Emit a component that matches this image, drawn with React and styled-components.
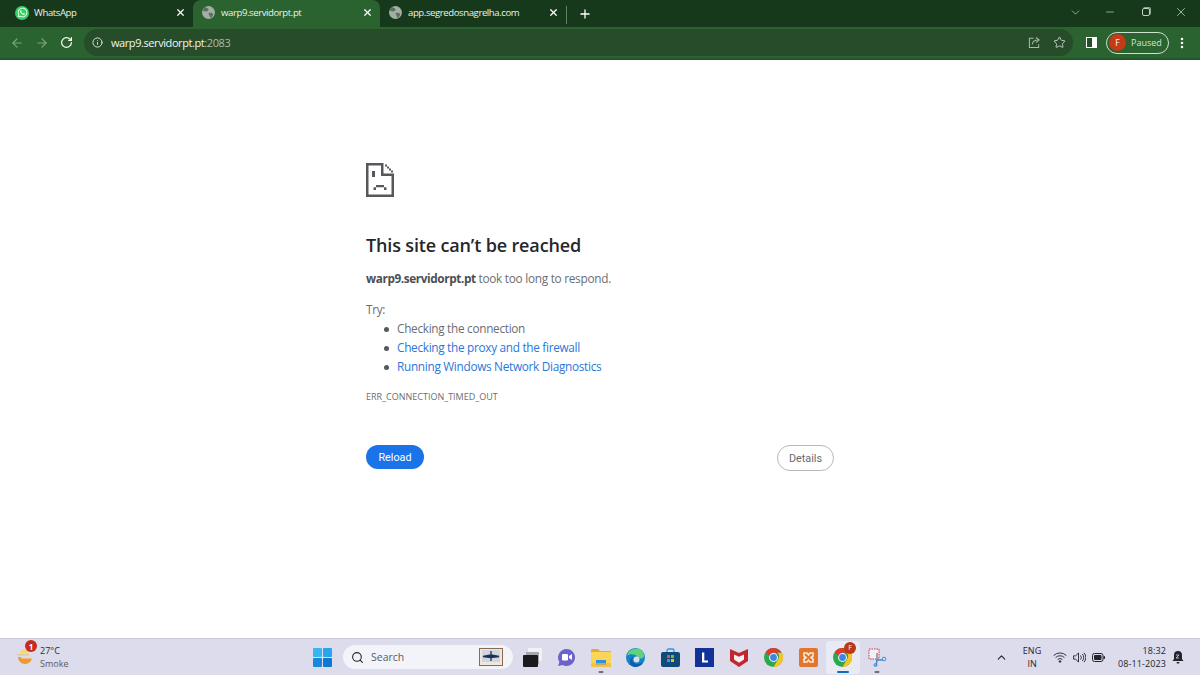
import React from "react";
import styled, { createGlobalStyle } from "styled-components";
import {
  ArrowLeft,
  ArrowRight,
  RotateCw,
  Info,
  Star,
  Plus,
  X,
  ChevronDown,
  ChevronUp,
  Minus,
  Search,
  EllipsisVertical,
} from "lucide-react";
import { FaWhatsapp } from "react-icons/fa";

const GlobalStyle = createGlobalStyle`
  html, body { margin: 0; padding: 0; background: #ffffff; }
  * { box-sizing: border-box; }
`;

const Screen = styled.div`
  width: 1200px;
  height: 675px;
  display: flex;
  flex-direction: column;
  overflow: hidden;
  font-family: "Open Sans", "Noto Sans", sans-serif;
`;

const TabStrip = styled.div`
  height: 27px;
  background: #17391b;
  display: flex;
  align-items: flex-end;
  color: #ffffff;
`;

const Tab = styled.div`
  width: ${(p) => p.$w}px;
  height: 27px;
  display: flex;
  align-items: center;
  padding: 0 7px 2px ${(p) => p.$pl}px;
  gap: ${(p) => p.$gap}px;
  font-size: 9.6px;
  letter-spacing: -0.42px;
  border-radius: 8px 8px 0 0;
  background: ${(p) => (p.$active ? "#2a632f" : "transparent")};
`;

const TabTitle = styled.span`
  flex: 1;
  white-space: nowrap;
  color: #eaf2ea;
`;

const WhatsBadge = styled.span`
  width: 14px;
  height: 14px;
  border-radius: 50%;
  background: #2fd35f;
  display: flex;
  align-items: center;
  justify-content: center;
  color: #ffffff;
`;

const StripDivider = styled.span`
  width: 1px;
  height: 18px;
  margin-bottom: 3px;
  background: #61806a;
`;

const StripPlus = styled.span`
  display: flex;
  margin-left: 11px;
  margin-bottom: 6px;
`;

const WindowControls = styled.div`
  margin-left: auto;
  height: 27px;
  padding-bottom: 3px;
  display: flex;
  align-items: center;
  color: #d8e4d8;
`;

const WindowButton = styled.span`
  width: ${(p) => p.$w}px;
  display: flex;
  justify-content: center;
`;

const RestoreIcon = styled.span`
  width: 8px;
  height: 8px;
  border: 1.2px solid #c3d0c4;
  border-radius: 2px;
  box-shadow: 1px -1px 0 0 #8fa893;
`;

const Toolbar = styled.div`
  height: 33px;
  background: #2a632f;
  border-bottom: 2px solid #245528;
  display: flex;
  align-items: center;
  padding-left: 4px;
  color: #ffffff;
`;

const NavButton = styled.span`
  width: 25px;
  display: flex;
  justify-content: center;
  color: ${(p) => (p.$off ? "#7fa483" : "#ffffff")};
`;

const Omnibox = styled.div`
  width: 989px;
  height: 27px;
  margin-left: 5px;
  border-radius: 14px;
  background: #264c29;
  display: flex;
  align-items: center;
  padding: 0 7px 0 8px;
  gap: 8px;
  font-size: 11px;
  letter-spacing: -0.42px;
`;

const Host = styled.span`
  color: #f2f6f2;
`;

const Port = styled.span`
  color: #a9bcab;
`;

const Address = styled.span`
  flex: 1;
`;

const OmniIcons = styled.span`
  display: flex;
  align-items: center;
  gap: 12px;
  color: #d0ddd1;
`;

const ShareWrap = styled.span`
  display: flex;
  color: #a8bcaa;
`;

const ToolbarRight = styled.div`
  display: flex;
  align-items: center;
  margin-left: 13px;
`;

const SidePanelIcon = styled.span`
  width: 11px;
  height: 11px;
  border: 1.5px solid #ffffff;
  border-right-width: 5px;
  background: #264c29;
`;

const ProfileChip = styled.div`
  width: 63px;
  height: 22px;
  margin-left: 9px;
  border: 1px solid #cfe0d0;
  border-radius: 11px;
  display: flex;
  align-items: center;
  padding-left: 2px;
  gap: 5px;
  font-size: 9px;
  color: #d3e5d5;
`;

const Avatar = styled.span`
  width: 17px;
  height: 17px;
  border-radius: 50%;
  background: #c63a17;
  color: #ffffff;
  font-size: 8.5px;
  display: flex;
  align-items: center;
  justify-content: center;
`;

const MenuDots = styled.span`
  display: flex;
  margin-left: 6px;
`;

const Page = styled.main`
  flex: 1;
  background: #ffffff;
  padding: 103px 0 0 366px;
`;

const ErrorBody = styled.div`
  width: 468px;
`;

const SadIcon = styled.svg`
  display: block;
  width: 28px;
  height: 34px;
`;

const Heading = styled.h1`
  margin: 35px 0 0;
  font-size: 18px;
  line-height: 26px;
  font-weight: 600;
  letter-spacing: -0.15px;
  color: #26272a;
`;

const Lead = styled.p`
  margin: 11px 0 0;
  font-size: 11.8px;
  letter-spacing: -0.27px;
  line-height: 19px;
  color: #6a6e73;
`;

const Strong = styled.strong`
  font-weight: 700;
  letter-spacing: -0.4px;
  color: #4b4f54;
`;

const TryLabel = styled.p`
  margin: 12px 0 0;
  font-size: 11.8px;
  letter-spacing: -0.3px;
  line-height: 19px;
  color: #6a6e73;
`;

const TryList = styled.ul`
  margin: 0;
  padding: 0 0 0 31px;
  list-style: none;
`;

const TryItem = styled.li`
  font-size: 11.8px;
  letter-spacing: -0.3px;
  line-height: 19px;
  color: ${(p) => (p.$link ? "#2b76d8" : "#6a6e73")};
  &::before {
    content: "";
    display: inline-block;
    width: 5px;
    height: 5px;
    margin: 0 8px 1px -13px;
    border-radius: 50%;
    background: #55585c;
    vertical-align: middle;
  }
`;

const ErrorCode = styled.div`
  margin-top: 14px;
  font-size: 9px;
  line-height: 14px;
  color: #6a6e73;
`;

const Actions = styled.div`
  margin-top: 41px;
  display: flex;
  justify-content: space-between;
  align-items: flex-start;
`;

const PrimaryButton = styled.button`
  width: 58px;
  height: 24px;
  border: 0;
  border-radius: 12px;
  background: #1a73e8;
  color: #ffffff;
  font-family: "Roboto", sans-serif;
  font-size: 10.8px;
  padding: 0;
`;

const GhostButton = styled.button`
  width: 57px;
  height: 26px;
  border: 1px solid #b6b8bb;
  border-radius: 13px;
  background: #ffffff;
  color: #666a6e;
  font-family: "Roboto", sans-serif;
  font-size: 10.8px;
  padding: 0;
`;

const Taskbar = styled.footer`
  height: 37px;
  background: #dcdcec;
  border-top: 1px solid #c9cadb;
  display: flex;
  align-items: center;
  position: relative;
`;

const WeatherWidget = styled.div`
  width: 313px;
  display: flex;
  align-items: center;
  padding-left: 16px;
  gap: 6px;
`;

const WeatherIcon = styled.span`
  position: relative;
  width: 18px;
  height: 18px;
  display: flex;
`;

const AlertBadge = styled.span`
  position: absolute;
  top: -8px;
  left: 9px;
  width: 12px;
  height: 12px;
  border-radius: 50%;
  background: #c62a20;
  color: #ffffff;
  font-size: 8px;
  font-weight: 700;
  display: flex;
  align-items: center;
  justify-content: center;
`;

const WeatherText = styled.div`
  display: flex;
  flex-direction: column;
  font-size: 9px;
  line-height: 13px;
  color: #2b2b33;
`;

const Muted = styled.span`
  color: #5b5b66;
`;

const SearchPill = styled.div`
  width: 170px;
  height: 24px;
  margin-left: 11px;
  border-radius: 12px;
  background: #f3f3fa;
  display: flex;
  align-items: center;
  padding: 0 10px 0 8px;
  gap: 7px;
  font-size: 10.5px;
  color: #5a5a62;
`;

const SearchLabel = styled.span`
  flex: 1;
`;

const Dock = styled.div`
  display: flex;
  align-items: center;
  margin-left: 2px;
`;

const DockSlot = styled.div`
  position: relative;
  width: 34.5px;
  height: 33px;
  display: flex;
  align-items: center;
  justify-content: center;
  border-radius: 3px;
  background: ${(p) => (p.$active ? "#eaeaf4" : "transparent")};
  &::after {
    content: "";
    display: ${(p) => (p.$mark ? "block" : "none")};
    position: absolute;
    bottom: 1px;
    left: 50%;
    transform: translateX(-50%);
    width: ${(p) => (p.$mark === "on" ? 12 : 5)}px;
    height: 2px;
    border-radius: 1px;
    background: ${(p) => (p.$mark === "on" ? "#0f6cbd" : "#6d6d78")};
  }
`;

const ProfileDot = styled.span`
  position: absolute;
  top: 1px;
  right: 4px;
  width: 12px;
  height: 12px;
  border-radius: 50%;
  background: #b93a14;
  color: #ffffff;
  font-size: 7px;
  display: flex;
  align-items: center;
  justify-content: center;
`;

const Tray = styled.div`
  margin-left: auto;
  display: flex;
  align-items: center;
  color: #24242c;
  padding-right: 16px;
`;

const LangBlock = styled.div`
  width: 26px;
  margin-left: 11px;
  display: flex;
  flex-direction: column;
  align-items: center;
  font-size: 9px;
  line-height: 13px;
`;

const TrayIcons = styled.div`
  display: flex;
  align-items: center;
  gap: 6px;
  margin-left: 8px;
`;

const Clock = styled.div`
  margin-left: 13px;
  display: flex;
  flex-direction: column;
  align-items: flex-end;
  font-size: 9px;
  line-height: 13px;
  letter-spacing: 0.1px;
`;

const BellWrap = styled.span`
  display: flex;
  margin-left: 6px;
`;

const TabGlobe = () => (
  <svg width="13" height="13" viewBox="0 0 13 13">
    <circle cx="6.500" cy="6.500" r="6.500" fill="#a3aea4" />
    <path d="M3 1.200c1.500.3 3 .8 3.500 2S5 5.500 4 5.500 1.500 4.800.6 4.500A6.500 6.500 0 0 1 3 1.200zM7 7c1.500-.5 3.500 0 4 1s-1 3-2.500 4c-.8-1-.7-2-1.200-3S5.800 7.500 7 7z" fill="#5d6f60" />
  </svg>
);

const ShareIcon = () => (
  <svg width="13" height="13" viewBox="0 0 14 14" fill="none" stroke="currentColor" strokeWidth="1.1">
    <path d="M6 2.5H1.5v10h10V9" />
    <path d="M4.5 9c.5-3 3-4.6 6-4.6M8.600 1.600l3.400 2.800-3.400 2.800" />
  </svg>
);

const SadTabIcon = () => (
  <SadIcon viewBox="0 0 28 34">
    <path
      fill="#58585c"
      d="M0 0h17.500v2.500H2.500v29h23V12h2.500v22H0zM15 2h2.500v8.500H28V13H15zM19 1.500h2v2h-2zM21 3.500h2v2h-2zM23 5.500h2v2h-2zM25 7.500h2v2h-2zM6 8h3v6H6zM10 22h8v2.200h-8zM7.500 24.200H10V27H7.500zM18 24.200h2.500V27H18z"
    />
  </SadIcon>
);

const WeatherArt = () => (
  <svg width="18" height="18" viewBox="0 0 18 18">
    <path d="M2 9a7 7 0 0 0 14 0z" fill="#ef9a2f" />
    <path d="M4 4a5 5 0 0 1 9 1H4z" fill="#f5d67a" />
    <rect x="1" y="6" width="12" height="1.600" rx=".8" fill="#d9c9a0" />
    <rect x="5" y="9" width="12" height="1.600" rx=".8" fill="#e8dcc0" />
  </svg>
);

const BookArt = () => (
  <svg width="24" height="18" viewBox="0 0 24 18">
    <rect x=".5" y=".5" width="23" height="17" fill="#eee7da" stroke="#8a6a50" />
    <rect x="3" y="2" width="18" height="12" fill="#cfd6e2" />
    <path d="M12 3v10M4 8.500l8-1.500 8 1.500-8 1z" stroke="#1f2f52" strokeWidth="1.300" fill="#1f2f52" />
  </svg>
);

const WinLogo = () => (
  <svg width="19" height="19" viewBox="0 0 19 19">
    <rect width="9" height="9" rx="1" fill="#38b6f0" />
    <rect x="10" width="9" height="9" rx="1" fill="#2aa5ea" />
    <rect y="10" width="9" height="9" rx="1" fill="#1689dc" />
    <rect x="10" y="10" width="9" height="9" rx="1" fill="#0f78cf" />
  </svg>
);

const TaskViewArt = () => (
  <svg width="19" height="19" viewBox="0 0 19 19">
    <rect x="5" y="0" width="14" height="13" rx="1" fill="#f2f2f5" />
    <rect x="3" y="4" width="13" height="12" fill="#a6a6ac" />
    <rect x="0" y="7" width="15" height="12" rx="1" fill="#1b1b1d" />
  </svg>
);

const ChatArt = () => (
  <svg width="19" height="19" viewBox="0 0 19 19">
    <path d="M9.500 1a8.500 8.500 0 1 1-4 16L1 18l1.400-4A8.500 8.500 0 0 1 9.500 1z" fill="#6b63c9" />
    <rect x="5" y="6" width="6" height="6.500" rx="1.200" fill="#fff" />
    <path d="M12 8l3-2v6l-3-2z" fill="#fff" />
  </svg>
);

const FolderArt = () => (
  <svg width="20" height="19" viewBox="0 0 20 19">
    <path d="M0 2a1 1 0 0 1 1-1h6l2 2h10a1 1 0 0 1 1 1v2H0z" fill="#e6ab2c" />
    <rect y="4" width="20" height="15" rx="1" fill="#fbd458" />
    <rect x="5" y="12" width="10" height="5" fill="#2f8fe0" />
    <rect y="15" width="20" height="4" rx="1" fill="#f0b93c" opacity=".7" />
  </svg>
);

const EdgeArt = () => (
  <svg width="19" height="19" viewBox="0 0 19 19">
    <circle cx="9.500" cy="9.500" r="9.500" fill="#1583c9" />
    <path d="M1 8a8.800 8.800 0 0 1 17-1.500c.6 2.600-1.600 4.200-4 4-2.600-.2-2-2.600-4.500-3.500C6 5.500 3 6 1 8z" fill="#5fd27c" />
    <path d="M8 9c-2 1-2.500 5 1 6.500 2.500 1 5.500.5 8-1.500-1.500 3-4.500 5-8 5C5 19 3 15 4.500 11.500 5 10 6.500 9 8 9z" fill="#0c5fa8" />
    <circle cx="10.500" cy="11.500" r="3" fill="#dcdcec" />
  </svg>
);

const StoreArt = () => (
  <svg width="19" height="19" viewBox="0 0 19 19">
    <path d="M6 4V2.500A1.500 1.500 0 0 1 7.500 1h4A1.500 1.500 0 0 1 13 2.500V4" fill="none" stroke="#2c9bd8" strokeWidth="1.300" />
    <rect y="4" width="19" height="15" rx="2" fill="#0f4a78" />
    <rect x="6" y="7" width="3" height="3" fill="#e8552c" />
    <rect x="10" y="7" width="3" height="3" fill="#7cbc2c" />
    <rect x="6" y="11" width="3" height="3" fill="#2c9be8" />
    <rect x="10" y="11" width="3" height="3" fill="#f4b820" />
  </svg>
);

const LArt = () => (
  <svg width="19" height="19" viewBox="0 0 19 19">
    <rect width="19" height="19" fill="#12329a" />
    <path d="M7 4.500h2.300v8H13V14.500H7z" fill="#fff" />
  </svg>
);

const McAfeeArt = () => (
  <svg width="18" height="19" viewBox="0 0 18 19">
    <path d="M0 1l9 4 9-4v12l-9 6-9-6z" fill="#c1272d" />
    <path d="M4 6.500l5 2.200 5-2.200v5l-5 3.300-5-3.300z" fill="#f4f0f4" />
  </svg>
);

const ChromeArt = () => (
  <svg width="19" height="19" viewBox="0 0 19 19">
    <circle cx="9.500" cy="9.500" r="9.500" fill="#2ea84f" />
    <path d="M9.500 0a9.500 9.500 0 0 1 8.230 4.750H9.500a4.750 4.750 0 0 0-4.300 2.700L1.500 4.200A9.500 9.500 0 0 1 9.500 0z" fill="#dd3b30" />
    <path d="M17.730 4.750A9.500 9.500 0 0 1 9.500 19l4.100-7.100a4.750 4.750 0 0 0 0-7.150z" fill="#f7c325" />
    <circle cx="9.500" cy="9.500" r="4.400" fill="#fff" />
    <circle cx="9.500" cy="9.500" r="3.400" fill="#3f83e8" />
  </svg>
);

const XamppArt = () => (
  <svg width="19" height="19" viewBox="0 0 19 19">
    <rect width="19" height="19" rx="2" fill="#e2762c" />
    <path d="M5 5h3l1.500 2L11 5h3v3l-2 1.500L14 11v3h-3l-1.500-2L8 14H5v-3l2-1.500L5 8z" fill="none" stroke="#fbeadb" strokeWidth="1.600" />
  </svg>
);

const SnipArt = () => (
  <svg width="19" height="19" viewBox="0 0 19 19">
    <rect x="1" y="1" width="10" height="10" fill="#f2f2f6" stroke="#c2334d" strokeDasharray="1.500 1" />
    <path d="M9 5v8" stroke="#7a8c9c" strokeWidth="1.500" />
    <path d="M9 12l-1 6M9 12h6" stroke="#3d8fc9" strokeWidth="1.500" fill="none" />
    <circle cx="16" cy="11" r="1.800" fill="none" stroke="#3d8fc9" />
    <circle cx="7.500" cy="17" r="1.500" fill="none" stroke="#3d8fc9" />
  </svg>
);

const WifiArt = () => (
  <svg width="14" height="11" viewBox="0 0 14 11" fill="none" stroke="#24242c" strokeWidth="0.9">
    <path d="M.6 3.600a9 9 0 0 1 12.800 0M2.600 5.600a6.200 6.200 0 0 1 8.800 0M4.600 7.600a3.400 3.400 0 0 1 4.800 0" />
    <circle cx="7" cy="9.500" r=".8" fill="#24242c" />
  </svg>
);

const VolumeArt = () => (
  <svg width="13" height="11" viewBox="0 0 13 11" fill="none" stroke="#24242c" strokeWidth="0.9">
    <path d="M.6 3.800h2L5.500 1v9L2.600 7.200h-2z" />
    <path d="M7.500 3.500a3 3 0 0 1 0 4M9.300 2a5 5 0 0 1 0 7M11 .8a7 7 0 0 1 0 9.400" />
  </svg>
);

const BatteryArt = () => (
  <svg width="13" height="9" viewBox="0 0 13 9">
    <rect x=".5" y=".5" width="10.500" height="8" rx="2" fill="none" stroke="#24242c" />
    <rect x="2" y="2" width="7.500" height="5" rx="1" fill="#24242c" />
    <rect x="11.500" y="3" width="1.500" height="3" rx=".7" fill="#24242c" />
  </svg>
);

const BellArt = () => (
  <svg width="12" height="14" viewBox="0 0 12 14">
    <path d="M6 1a4 4 0 0 1 4 4v4l1.500 2H.5L2 9V5a4 4 0 0 1 4-4z" fill="#24242c" />
    <rect x="4.500" y="12" width="3" height="1.600" rx=".8" fill="#24242c" />
    <path d="M4 5h3L4 8h3" stroke="#dcdcec" strokeWidth=".8" fill="none" />
  </svg>
);

const dockItems = [
  { key: "tasks", art: <TaskViewArt /> },
  { key: "chat", art: <ChatArt /> },
  { key: "files", art: <FolderArt />, mark: "off" },
  { key: "edge", art: <EdgeArt /> },
  { key: "store", art: <StoreArt /> },
  { key: "lens", art: <LArt /> },
  { key: "mcafee", art: <McAfeeArt /> },
  { key: "chrome", art: <ChromeArt /> },
  { key: "xampp", art: <XamppArt /> },
  { key: "chrome-profile", art: <ChromeArt />, mark: "on", active: true, dot: "F" },
  { key: "snip", art: <SnipArt />, mark: "off" },
];

const tabs = [
  { title: "warp9.servidorpt.pt", w: 187, active: true },
  { title: "app.segredosnagrelha.com", w: 186 },
];

export default function App() {
  return (
    <Screen>
      <GlobalStyle />
      <TabStrip>
        <Tab $w={193} $pl={15} $gap={5}>
          <WhatsBadge>
            <FaWhatsapp size={11} />
          </WhatsBadge>
          <TabTitle>WhatsApp</TabTitle>
          <X size={11} strokeWidth={2.6} />
        </Tab>
        {tabs.map((t) => (
          <Tab key={t.title} $w={t.w} $pl={9} $gap={6} $active={t.active}>
            <TabGlobe />
            <TabTitle>{t.title}</TabTitle>
            <X size={11} strokeWidth={2.6} />
          </Tab>
        ))}
        <StripDivider />
        <StripPlus>
          <Plus size={14} strokeWidth={2.2} />
        </StripPlus>
        <WindowControls>
          <WindowButton $w={30}>
            <ChevronDown size={13} strokeWidth={1.2} />
          </WindowButton>
          <WindowButton $w={40}>
            <Minus size={12} strokeWidth={1.2} />
          </WindowButton>
          <WindowButton $w={32}>
            <RestoreIcon />
          </WindowButton>
          <WindowButton $w={38}>
            <X size={14} strokeWidth={1.2} />
          </WindowButton>
        </WindowControls>
      </TabStrip>
      <Toolbar>
        <NavButton $off>
          <ArrowLeft size={14} />
        </NavButton>
        <NavButton $off>
          <ArrowRight size={14} />
        </NavButton>
        <NavButton>
          <RotateCw size={13} strokeWidth={2.2} />
        </NavButton>
        <Omnibox>
          <Info size={11} color="#e6eee6" />
          <Address>
            <Host>warp9.servidorpt.pt</Host>
            <Port>:2083</Port>
          </Address>
          <OmniIcons>
            <ShareWrap>
              <ShareIcon />
            </ShareWrap>
            <Star size={13} strokeWidth={1.6} />
          </OmniIcons>
        </Omnibox>
        <ToolbarRight>
          <SidePanelIcon />
          <ProfileChip>
            <Avatar>F</Avatar>
            Paused
          </ProfileChip>
          <MenuDots>
            <EllipsisVertical size={14} strokeWidth={2.4} />
          </MenuDots>
        </ToolbarRight>
      </Toolbar>
      <Page>
        <ErrorBody>
          <SadTabIcon />
          <Heading>This site can’t be reached</Heading>
          <Lead>
            <Strong>warp9.servidorpt.pt</Strong> took too long to respond.
          </Lead>
          <TryLabel>Try:</TryLabel>
          <TryList>
            <TryItem>Checking the connection</TryItem>
            <TryItem $link>Checking the proxy and the firewall</TryItem>
            <TryItem $link>Running Windows Network Diagnostics</TryItem>
          </TryList>
          <ErrorCode>ERR_CONNECTION_TIMED_OUT</ErrorCode>
          <Actions>
            <PrimaryButton>Reload</PrimaryButton>
            <GhostButton>Details</GhostButton>
          </Actions>
        </ErrorBody>
      </Page>
      <Taskbar>
        <WeatherWidget>
          <WeatherIcon>
            <WeatherArt />
            <AlertBadge>1</AlertBadge>
          </WeatherIcon>
          <WeatherText>
            <span>27°C</span>
            <Muted>Smoke</Muted>
          </WeatherText>
        </WeatherWidget>
        <WinLogo />
        <SearchPill>
          <Search size={13} color="#24242c" />
          <SearchLabel>Search</SearchLabel>
          <BookArt />
        </SearchPill>
        <Dock>
          {dockItems.map((d) => (
            <DockSlot key={d.key} $mark={d.mark} $active={d.active}>
              {d.art}
              {d.dot && <ProfileDot>{d.dot}</ProfileDot>}
            </DockSlot>
          ))}
        </Dock>
        <Tray>
          <ChevronUp size={13} />
          <LangBlock>
            <span>ENG</span>
            <span>IN</span>
          </LangBlock>
          <TrayIcons>
            <WifiArt />
            <VolumeArt />
            <BatteryArt />
          </TrayIcons>
          <Clock>
            <span>18:32</span>
            <span>08-11-2023</span>
          </Clock>
          <BellWrap>
            <BellArt />
          </BellWrap>
        </Tray>
      </Taskbar>
    </Screen>
  );
}
